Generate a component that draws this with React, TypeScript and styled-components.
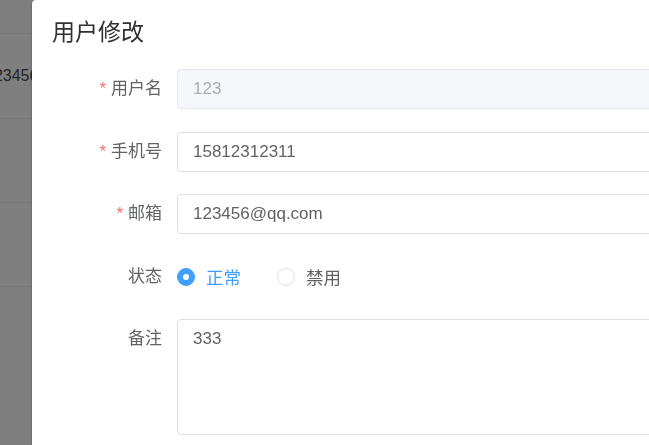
import styled, { createGlobalStyle } from "styled-components";

const GlobalStyle = createGlobalStyle`
  html, body {
    margin: 0;
    padding: 0;
    background: #fff;
    overflow: hidden;
  }
  body {
    font-family: "Liberation Sans", "Noto Sans CJK SC", Arial, sans-serif;
    color: #606266;
  }
`;

const Page = styled.div`
  width: 649px;
  height: 445px;
  overflow: hidden;
`;

const Table = styled.div`
  margin-left: -15px;
  width: 200px;
`;

const TableRow = styled.div<{ $h: number }>`
  height: ${(p) => p.$h}px;
  border-bottom: 1px solid #ebeef5;
  display: flex;
  align-items: center;
  font-size: 16px;
  color: #4a4a4a;
`;

const Overlay = styled.div`
  position: fixed;
  inset: 0;
  background: rgba(0, 0, 0, 0.5);
`;

const Dialog = styled.div`
  position: fixed;
  left: 32px;
  top: 0;
  width: 820px;
  height: 520px;
  background: #fff;
  border-radius: 4px;
  box-shadow: 0 1px 3px rgba(0, 0, 0, 0.3);
`;

const Header = styled.div`
  padding: 20px 20px 10px;
`;

const Title = styled.span`
  font-size: 23px;
  line-height: 24px;
  color: #303133;
`;

const Body = styled.div`
  padding: 15px 20px;
`;

const FormItem = styled.div`
  display: flex;
  align-items: flex-start;
  margin-bottom: 22.5px;
`;

const Label = styled.label`
  width: 125px;
  flex: none;
  box-sizing: border-box;
  padding-right: 15px;
  text-align: right;
  font-size: 17px;
  line-height: 40px;
  color: #606266;
`;

const Star = styled.span`
  color: #f56c6c;
  margin-right: 5px;
`;

const Input = styled.input`
  flex: 1;
  box-sizing: border-box;
  height: 40px;
  padding: 0 15px;
  border: 1px solid #dcdfe6;
  border-radius: 4px;
  font-family: inherit;
  font-size: 17px;
  color: #606266;
  background: #fff;
  outline: none;

  &:disabled {
    background: #f5f7fa;
    border-color: #e4e7ed;
    color: #a8abb2;
  }
`;

const TextArea = styled.textarea`
  flex: 1;
  box-sizing: border-box;
  height: 116px;
  padding: 6px 15px;
  border: 1px solid #dcdfe6;
  border-radius: 4px;
  font-family: inherit;
  font-size: 17px;
  line-height: 1.5;
  color: #606266;
  resize: none;
  outline: none;
`;

const RadioGroup = styled.div`
  display: flex;
  align-items: center;
  height: 40px;
  gap: 36px;
`;

const Radio = styled.span`
  display: flex;
  align-items: center;
  gap: 11px;
  font-size: 17.5px;
`;

const Dot = styled.span<{ $on?: boolean }>`
  width: 18px;
  height: 18px;
  box-sizing: border-box;
  border-radius: 50%;
  border: 1px solid ${(p) => (p.$on ? "#409eff" : "#dcdfe6")};
  background: ${(p) => (p.$on ? "#409eff" : "#fff")};
  display: flex;
  align-items: center;
  justify-content: center;

  &::after {
    content: "";
    width: 6px;
    height: 6px;
    border-radius: 50%;
    background: #fff;
  }
`;

const RadioText = styled.span<{ $on?: boolean }>`
  color: ${(p) => (p.$on ? "#409eff" : "#606266")};
`;

export default function App() {
  return (
    <Page>
      <GlobalStyle />
      <Table>
        <TableRow $h={33} />
        <TableRow $h={84}>123456@qq.com</TableRow>
        <TableRow $h={83} />
        <TableRow $h={83} />
      </Table>
      <Overlay />
      <Dialog>
        <Header>
          <Title>用户修改</Title>
        </Header>
        <Body>
          <FormItem>
            <Label>
              <Star>*</Star>用户名
            </Label>
            <Input value="123" disabled readOnly />
          </FormItem>
          <FormItem>
            <Label>
              <Star>*</Star>手机号
            </Label>
            <Input value="15812312311" readOnly />
          </FormItem>
          <FormItem>
            <Label>
              <Star>*</Star>邮箱
            </Label>
            <Input value="123456@qq.com" readOnly />
          </FormItem>
          <FormItem>
            <Label>状态</Label>
            <RadioGroup>
              <Radio>
                <Dot $on />
                <RadioText $on>正常</RadioText>
              </Radio>
              <Radio>
                <Dot />
                <RadioText>禁用</RadioText>
              </Radio>
            </RadioGroup>
          </FormItem>
          <FormItem>
            <Label>备注</Label>
            <TextArea value="333" readOnly />
          </FormItem>
        </Body>
      </Dialog>
    </Page>
  );
}
